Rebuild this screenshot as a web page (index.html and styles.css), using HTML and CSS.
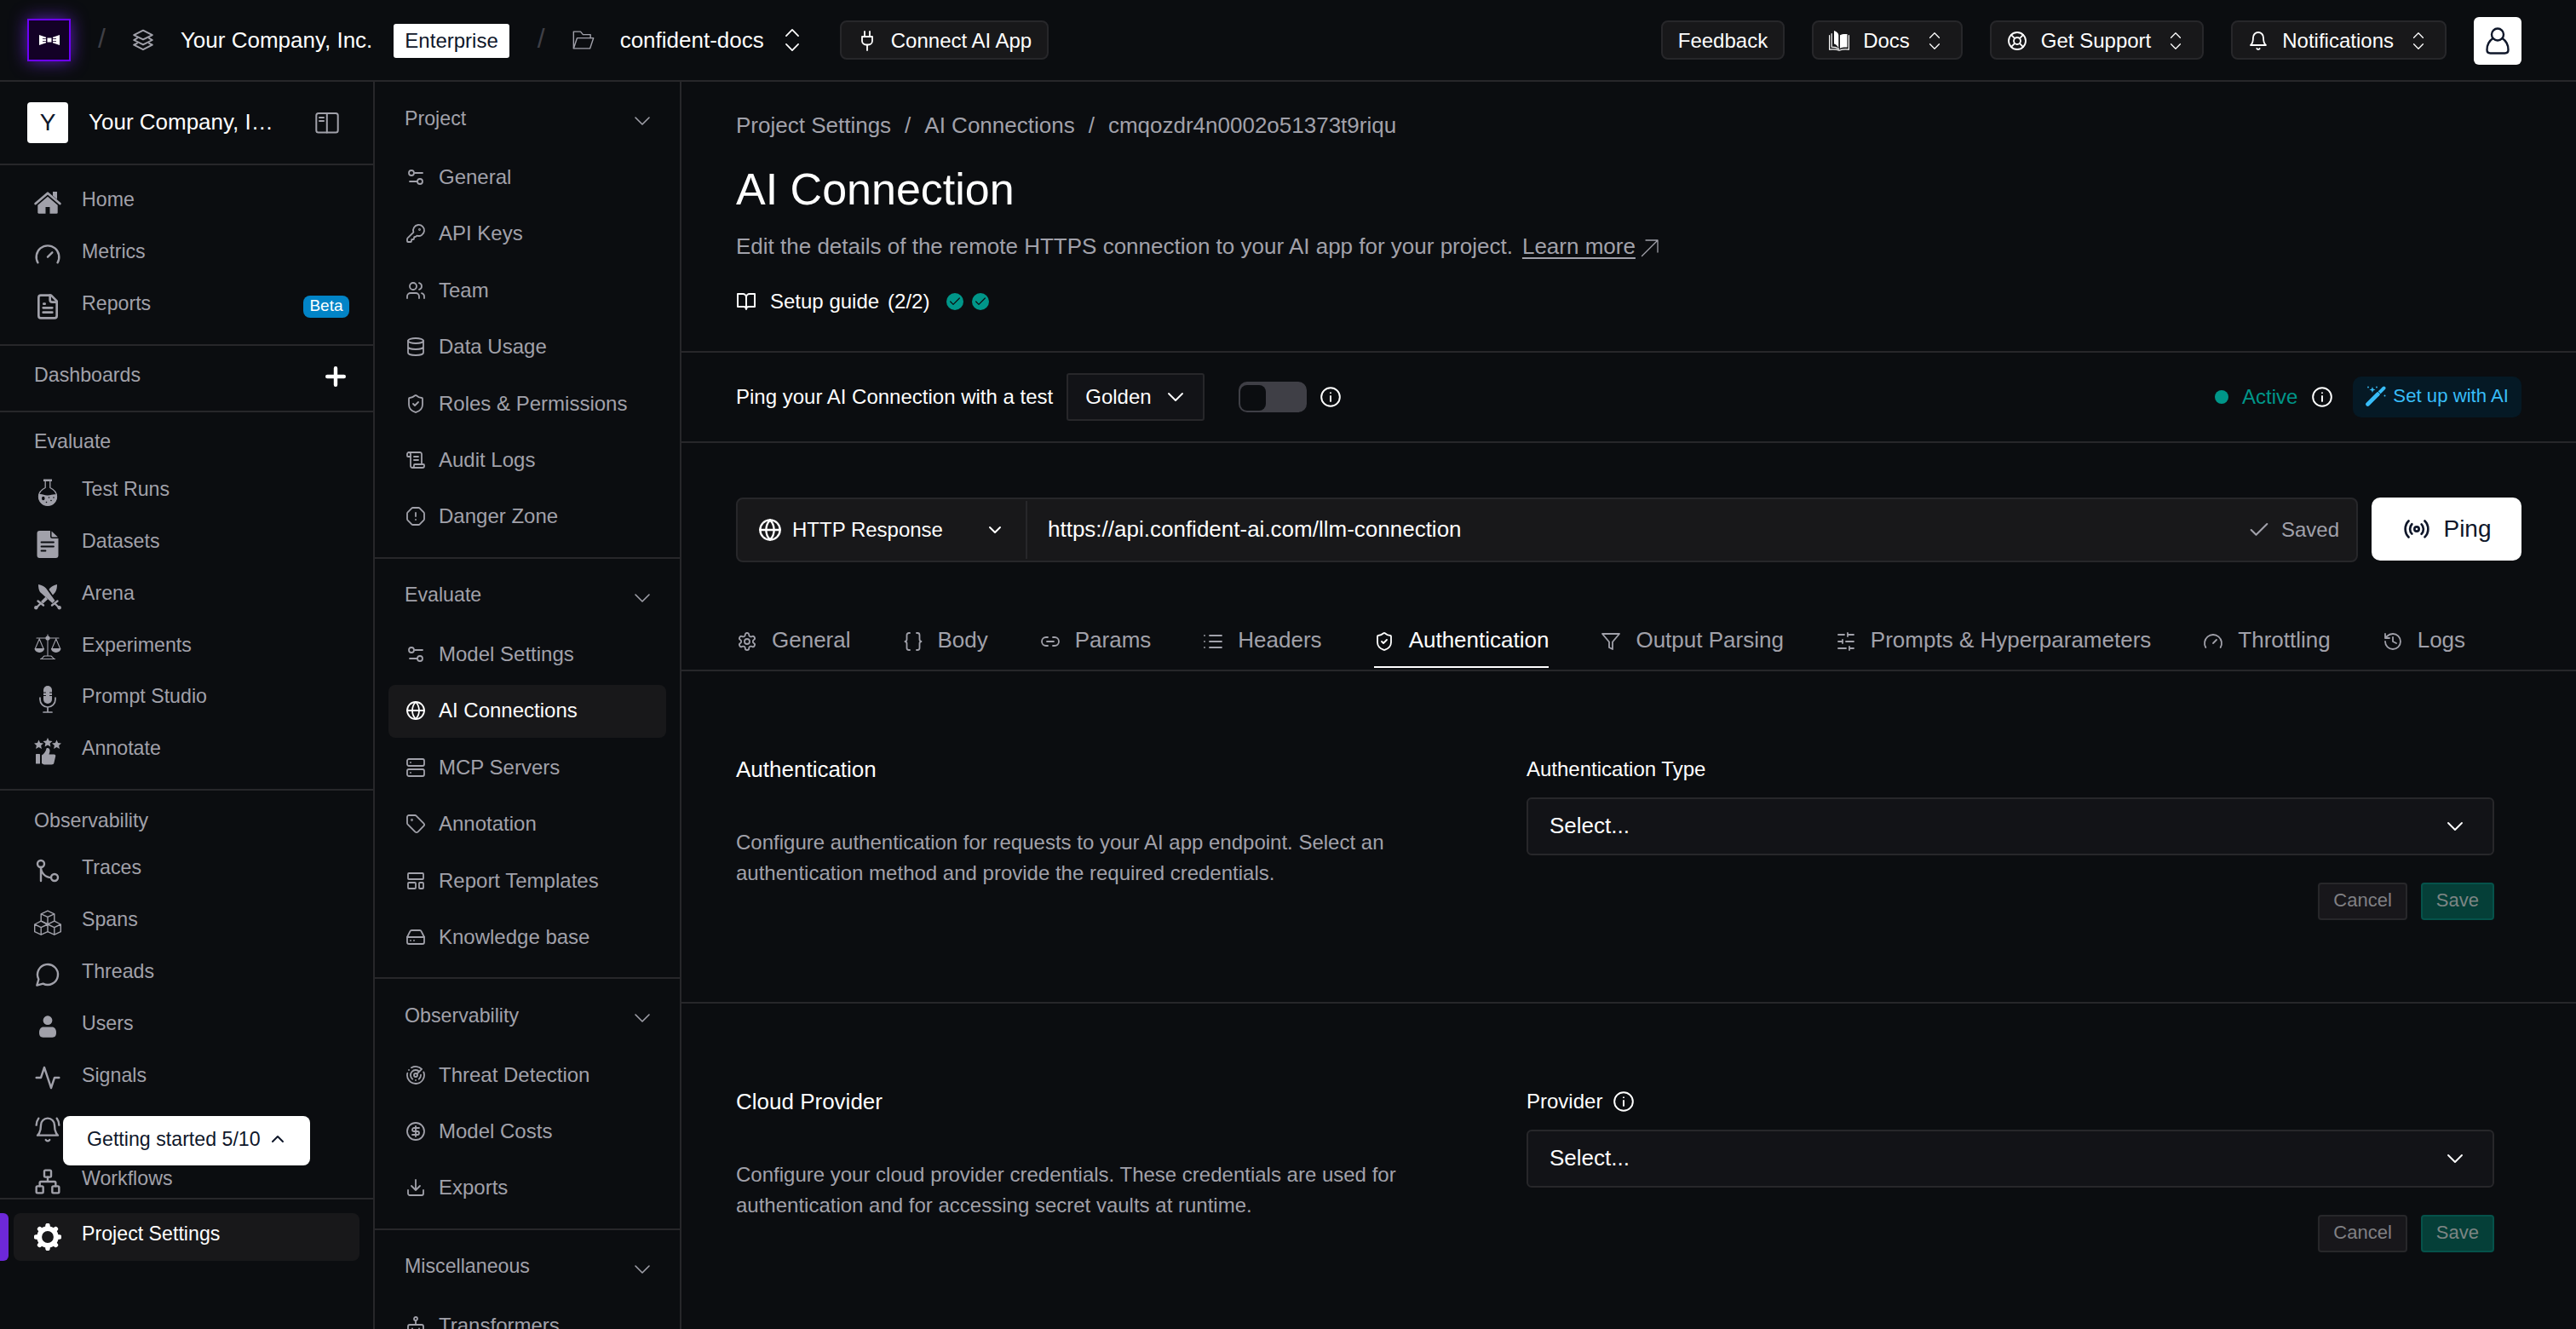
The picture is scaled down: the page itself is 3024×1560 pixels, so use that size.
FILE: index.html
```html
<!DOCTYPE html>
<html lang="en">
<head>
    <meta charset="UTF-8">
    <meta name="viewport" content="width=device-width, initial-scale=1.0">
    <title>AI Connection</title>
    <link rel="stylesheet" href="styles.css">
</head>
<body>
    <!-- Icon sprite -->
    <svg class="sprite">
        <symbol id="layers" viewBox="0 0 24 24"><path d="M12 1.5 2 6.5l10 5 10-5z"/><path d="M5.5 10 2 12l10 5 10-5-3.5-2"/><path d="M5.5 15.5 2 17.3l10 5 10-5-3.5-1.8"/></symbol>
        <symbol id="folder" viewBox="0 0 24 24"><path d="M2 20V3.500h7l2.500 3h7.500v3.500"/><path d="M2 20.500 5.500 10H22l-3.500 10.500z"/></symbol>
        <symbol id="updown" viewBox="0 0 24 24"><path d="m7 15.500 5 5 5-5"/><path d="m7 8.500 5-5 5 5"/></symbol>
        <symbol id="down" viewBox="0 0 24 24"><path d="m6 9 6 6 6-6"/></symbol>
        <symbol id="up" viewBox="0 0 24 24"><path d="m18 15-6-6-6 6"/></symbol>
        <symbol id="plug" viewBox="0 0 24 24"><path d="M12 23v-6"/><path d="M9 7V1"/><path d="M15 7V1"/><path d="M18 7v5a4.500 4.500 0 0 1-4.500 4.500h-3A4.500 4.500 0 0 1 6 12V7z"/></symbol>
        <symbol id="docs" viewBox="0 0 24 24"><path d="M6 0c3.500 1 5 3 5.300 5v15.500C10 17.500 8 16 6 15.500z" fill="currentColor" stroke="none"/><path d="M13 5.200C15 4 18 3.700 21.500 4v15.500c-3.500-.3-6.500.2-8.500 1.300z" fill="currentColor" stroke="none"/><path d="M.6 5.500v16.700c4-.6 8-.4 11.400 1.100 3.500-1.500 7.500-1.700 11.400-1.100V5.500M3.200 3.500v15.700c3 0 6 .6 8.500 2.300" stroke-width="1.200"/></symbol>
        <symbol id="support" viewBox="0 0 24 24"><circle cx="12" cy="12" r="10"/><circle cx="12" cy="12" r="4"/><path d="m4.930 4.930 4.240 4.240M14.830 9.170l4.240-4.240M14.830 14.830l4.240 4.240M9.170 14.830l-4.240 4.240"/></symbol>
        <symbol id="bell" viewBox="0 0 24 24"><path d="M6 8a6 6 0 0 1 12 0c0 7 3 9 3 9H3s3-2 3-9"/><path d="M10.300 21a1.940 1.940 0 0 0 3.400 0"/></symbol>
        <symbol id="person" viewBox="0 0 32 32"><circle cx="16" cy="8.500" r="7"/><path d="M10.500 13C6 16 3.500 20.500 3.500 26.500c0 2.500 1.500 4 4 4h17c2.500 0 4-1.500 4-4 0-6-2.500-10.500-7-13.500"/></symbol>
        <symbol id="panel" viewBox="0 0 28 28"><rect x="1.300" y="3" width="25.400" height="22.400" rx="2.500"/><path d="M13.800 3v22.400M5 8h5M5 12h5"/></symbol>
        <symbol id="plus" viewBox="0 0 24 24"><path d="M12 2.200v19.600M2.200 12h19.600" stroke-width="4.400"/></symbol>

        <!-- left rail -->
        <symbol id="home" viewBox="0 0 32 32"><path d="M1.700 17 16 4.800 30.300 17" stroke-width="2.800"/><path d="M22 3h5v9l-5-4.200z" fill="currentColor" stroke="none"/><path d="M16 8.800 4.300 18.700v8.800c0 .8.400 1.200 1.200 1.200h8V21h5v7.700h8c.8 0 1.200-.4 1.200-1.200v-8.800z" fill="currentColor" stroke="none"/></symbol>
        <symbol id="gauge" viewBox="0 0 24 24"><path d="m12 14 4-4"/><path d="M3.340 19a10 10 0 1 1 17.320 0"/></symbol>
        <symbol id="file" viewBox="0 0 24 24"><path d="M15 2H6a2 2 0 0 0-2 2v16a2 2 0 0 0 2 2h12a2 2 0 0 0 2-2V7z"/><path d="M14 2v4a2 2 0 0 0 2 2h4"/><path d="M9.500 9.500H8.500M16 13H8M16 17H8"/></symbol>
        <symbol id="flask" viewBox="0 0 32 32"><path d="M11 .5h10V3H11z" fill="currentColor" stroke="none"/><path d="M13.200 3v7.500C8 13 5.500 16.500 5.500 20.800a10.500 10.500 0 0 0 21 0c0-4.300-2.500-7.800-7.700-10.300V3" stroke-width="1.300"/><path d="M5.200 18.500c4-1.500 7 1.500 11 1 4-.5 7-2 10.600-1a11 11 0 1 1-21.600 0z" fill="currentColor" stroke="none"/><g fill="#0b0d10" stroke="none"><ellipse cx="10.800" cy="23" rx="1.800" ry="2.200"/><circle cx="17.500" cy="22" r=".8"/><circle cx="20" cy="25.500" r=".8"/><circle cx="23" cy="22" r=".8"/><circle cx="14.500" cy="27.500" r=".8"/></g></symbol>
        <symbol id="dataset" viewBox="0 0 32 32"><path d="M6.500 0H19v6.500A2.500 2.500 0 0 0 21.500 9H28.500v20a3 3 0 0 1-3 3h-19a3 3 0 0 1-3-3V3a3 3 0 0 1 3-3z" fill="currentColor" stroke="none"/><path d="M20.500.5 28 7.500h-6.500a1 1 0 0 1-1-1z" fill="currentColor" stroke="none"/><path d="M8.500 13.500h14.500M8.500 18.500h14.500M8.500 23.500h5" stroke="#0b0d10" stroke-width="1.800"/></symbol>
        <symbol id="swords" viewBox="0 0 32 32"><g fill="currentColor" stroke="none"><path d="M5 2c4 .8 7 2.200 9 4.500l10.500 14.500-3 3L7 11C5.500 8.500 5 5.500 5 2z"/><path d="M27 2c-3.500.8-6.500 2.200-8.500 4.500l-1 1.400 4.500 6.600L25 11c1.500-2.500 2-5.500 2-9zM13.500 16.500 8 22l2.500 2.500 5.500-5z"/><circle cx="2.300" cy="29.200" r="2.200"/><circle cx="29.700" cy="29.200" r="2.200"/></g><path d="M4.500 21.500l6.500 5M27.500 21.500l-6.500 5" stroke-width="2.400"/><path d="M7.500 24.500 3 29M24.500 24.500 29 29" stroke-width="2.400"/></symbol>
        <symbol id="scales" viewBox="0 0 32 32"><g stroke-width="1.100"><path d="M3 5h26M16 1v25M6.200 6 1.500 17M6.200 6l4.700 11M25.800 6l-4.700 11M25.800 6l4.700 11M12 26h8M8.500 29.300 12 26M20 26l3.500 3.300M7.500 29.500h17"/></g><g fill="currentColor" stroke="none"><circle cx="16" cy="5" r="2.600"/><path d="M.5 17h11.600a5.800 5 0 0 1-11.600 0zM19.900 17h11.600a5.800 5 0 0 1-11.600 0z"/></g></symbol>
        <symbol id="mic" viewBox="0 0 32 32"><rect x="11" y="0" width="10" height="21" rx="5" fill="currentColor" stroke="none"/><path d="M10.500 8h3M18.500 8h3M10.500 11.500h3M18.500 11.500h3" stroke="#0b0d10" stroke-width="1"/><path d="M7 14v2a9 9 0 0 0 18 0v-2M16 25v5M11 31h10" stroke-width="1.700"/></symbol>
        <symbol id="annotate" viewBox="0 0 32 32"><g fill="currentColor" stroke="none"><path d="m16 0 1.600 3.500 3.900.4-2.900 2.600.8 3.900-3.400-2-3.400 2 .8-3.900-2.900-2.600 3.900-.4z"/><path d="m5.500 2.500 1.600 3.500 3.900.4L8.100 9l.8 3.900-3.400-2-3.400 2L2.900 9 0 6.400l3.900-.4zM26.500 2.500 28.100 6l3.900.4L29.100 9l.8 3.900-3.400-2-3.400 2 .8-3.900L21 6.400l3.900-.4z"/><rect x="2" y="19" width="5" height="11.500" rx=".6"/><path d="M9 20.500c3-2 4.800-4.500 5.500-8 1.800-1 4 0 4 2.500 0 2-.8 3.500-1 4.500h6c1.300 0 2 1 1.700 2.200L23.500 29c-.4 1.800-1.200 2.500-3 2.500H13c-1.800 0-3-.6-4-1.500z"/></g></symbol>
        <symbol id="traces" viewBox="0 0 24 24"><circle cx="18" cy="18" r="3"/><circle cx="6" cy="6" r="3"/><path d="M6 21V9a9 9 0 0 0 9 9"/></symbol>
        <symbol id="spans" viewBox="0 0 32 32"><g stroke-width="1.400"><path d="M16 2.200 23.800 5.800v8.400L16 18l-7.800-3.800V5.800zM8.200 5.800 16 9.400l7.800-3.600M16 9.400V18"/><path d="M8.200 14.200 16 18v8.700l-7.800 3.500-7.500-3.500V18zM.7 18l7.500 3.600L16 18M8.200 21.600v8.600"/><path d="M23.800 14.200 31.300 18v8.700l-7.500 3.500-7.800-3.500M16 18l7.800 3.600 7.500-3.600M23.800 21.600v8.600"/></g></symbol>
        <symbol id="threads" viewBox="0 0 24 24"><path d="M7.900 20A9 9 0 1 0 4 16.100L2.500 21.500z"/></symbol>
        <symbol id="user" viewBox="0 0 32 32"><g fill="currentColor" stroke="none"><circle cx="16" cy="8.700" r="5.400"/><path d="M11 16.500h10c3 0 5 2.500 5 6.500 0 4-1.500 5.700-4.500 5.700h-11C7.500 28.700 6 27 6 23c0-4 2-6.500 5-6.500z"/></g></symbol>
        <symbol id="signals" viewBox="0 0 24 24"><path d="M22 12h-4l-3 9L9 3l-3 9H2"/></symbol>
        <symbol id="bellring" viewBox="0 0 24 24"><path d="M6 8a6 6 0 0 1 12 0c0 7 3 9 3 9H3s3-2 3-9"/><path d="M10.300 21a1.940 1.940 0 0 0 3.400 0"/><path d="M4 2C2.800 3.700 2 5.700 2 8M22 8c0-2.300-.8-4.300-2-6"/></symbol>
        <symbol id="workflow" viewBox="0 0 24 24"><rect x="16" y="16" width="6" height="6" rx="1"/><rect x="2" y="16" width="6" height="6" rx="1"/><rect x="9" y="2" width="6" height="6" rx="1"/><path d="M5 16v-3a1 1 0 0 1 1-1h12a1 1 0 0 1 1 1v3M12 12V8"/></symbol>
        <symbol id="gear" viewBox="0 0 32 32"><circle cx="16" cy="16" r="9.800" stroke-width="5.800"/><path d="M16 5V2.500M16 27v2.500M5 16H2.500M27 16h2.500M8.200 8.200 6.600 6.600M23.800 8.200l1.600-1.600M8.200 23.800l-1.600 1.600M23.800 23.800l1.600 1.600" stroke-width="5.500"/></symbol>

        <!-- settings column -->
        <symbol id="settings2" viewBox="0 0 24 24"><path d="M20 7h-9M14 17H5"/><circle cx="17" cy="17" r="3"/><circle cx="7" cy="7" r="3"/></symbol>
        <symbol id="key" viewBox="0 0 24 24"><path d="M2.586 17.414A2 2 0 0 0 2 18.828V21a1 1 0 0 0 1 1h3a1 1 0 0 0 1-1v-1a1 1 0 0 1 1-1h1a1 1 0 0 0 1-1v-1a1 1 0 0 1 1-1h.172a2 2 0 0 0 1.414-.586l.814-.814a6.500 6.500 0 1 0-4-4z"/><circle cx="16.500" cy="7.500" r=".5"/></symbol>
        <symbol id="team" viewBox="0 0 24 24"><path d="M16 21v-2a4 4 0 0 0-4-4H6a4 4 0 0 0-4 4v2"/><circle cx="9" cy="7" r="4"/><path d="M22 21v-2a4 4 0 0 0-3-3.870M16 3.130a4 4 0 0 1 0 7.750"/></symbol>
        <symbol id="database" viewBox="0 0 24 24"><ellipse cx="12" cy="5" rx="9" ry="3"/><path d="M3 5v14a9 3 0 0 0 18 0V5M3 12a9 3 0 0 0 18 0"/></symbol>
        <symbol id="shield" viewBox="0 0 24 24"><path d="M20 13c0 5-3.500 7.500-7.660 8.950a1 1 0 0 1-.67-.01C7.500 20.500 4 18 4 13V6a1 1 0 0 1 1-1c2 0 4.500-1.200 6.240-2.720a1.170 1.170 0 0 1 1.520 0C14.510 3.810 17 5 19 5a1 1 0 0 1 1 1z"/><path d="m9 12 2 2 4-4"/></symbol>
        <symbol id="scroll" viewBox="0 0 24 24"><path d="M15 12h-5M15 8h-5M19 17V5a2 2 0 0 0-2-2H4"/><path d="M8 21h12a2 2 0 0 0 2-2v-1a1 1 0 0 0-1-1H11a1 1 0 0 0-1 1v1a2 2 0 1 1-4 0V5a2 2 0 1 0-4 0v2a1 1 0 0 0 1 1h3"/></symbol>
        <symbol id="octagon" viewBox="0 0 24 24"><path d="M12 16h.01M12 8v4"/><path d="M15.312 2a2 2 0 0 1 1.414.586l4.688 4.688A2 2 0 0 1 22 8.688v6.624a2 2 0 0 1-.586 1.414l-4.688 4.688a2 2 0 0 1-1.414.586H8.688a2 2 0 0 1-1.414-.586l-4.688-4.688A2 2 0 0 1 2 15.312V8.688a2 2 0 0 1 .586-1.414l4.688-4.688A2 2 0 0 1 8.688 2z"/></symbol>
        <symbol id="globe" viewBox="0 0 24 24"><circle cx="12" cy="12" r="10"/><path d="M12 2a14.500 14.500 0 0 0 0 20 14.500 14.500 0 0 0 0-20M2 12h20"/></symbol>
        <symbol id="server" viewBox="0 0 24 24"><rect x="2" y="2" width="20" height="8" rx="2"/><rect x="2" y="14" width="20" height="8" rx="2"/><path d="M6 6h.01M6 18h.01"/></symbol>
        <symbol id="tag" viewBox="0 0 24 24"><path d="M12.586 2.586A2 2 0 0 0 11.172 2H4a2 2 0 0 0-2 2v7.172a2 2 0 0 0 .586 1.414l8.704 8.704a2.426 2.426 0 0 0 3.420 0l6.580-6.580a2.426 2.426 0 0 0 0-3.420z"/><circle cx="7.500" cy="7.500" r=".5"/></symbol>
        <symbol id="template" viewBox="0 0 24 24"><rect x="3" y="3" width="18" height="7" rx="1"/><rect x="3" y="14" width="9" height="7" rx="1"/><rect x="16" y="14" width="5" height="7" rx="1"/></symbol>
        <symbol id="drive" viewBox="0 0 24 24"><path d="M22 12H2M6 16h.01M10 16h.01"/><path d="M5.450 5.110 2 12v6a2 2 0 0 0 2 2h16a2 2 0 0 0 2-2v-6l-3.450-6.890A2 2 0 0 0 16.760 4H7.240a2 2 0 0 0-1.790 1.110z"/></symbol>
        <symbol id="radar" viewBox="0 0 24 24"><path d="M19.070 4.930A10 10 0 0 0 6.990 3.340M4 6h.01M2.290 9.620A10 10 0 1 0 21.310 8.350M16.240 7.760A6 6 0 1 0 8.230 16.670M12 18h.01M17.990 11.660A6 6 0 0 1 15.770 16.670M13.410 10.590l5.660-5.660"/><circle cx="12" cy="12" r="2"/></symbol>
        <symbol id="dollar" viewBox="0 0 24 24"><circle cx="12" cy="12" r="10"/><path d="M16 8h-6a2 2 0 1 0 0 4h4a2 2 0 1 1 0 4H8M12 18V6"/></symbol>
        <symbol id="download" viewBox="0 0 24 24"><path d="M21 15v4a2 2 0 0 1-2 2H5a2 2 0 0 1-2-2v-4M7 10l5 5 5-5M12 15V3"/></symbol>
        <symbol id="bot" viewBox="0 0 24 24"><circle cx="12" cy="4" r="2"/><path d="M12 6v5M8 15.500h.01M16 15.500h.01"/><rect x="3" y="11" width="18" height="10" rx="2"/></symbol>

        <!-- page -->
        <symbol id="arrow" viewBox="0 0 24 24"><path d="M2.500 21.500 21 3M7 3h14v14"/></symbol>
        <symbol id="book" viewBox="0 0 24 24"><path d="M2 3h6a4 4 0 0 1 4 4v14a3 3 0 0 0-3-3H2zM22 3h-6a4 4 0 0 0-4 4v14a3 3 0 0 1 3-3h7z"/></symbol>
        <symbol id="check" viewBox="0 0 24 24"><path d="M20 6 9 17l-5-5"/></symbol>
        <symbol id="info" viewBox="0 0 24 24"><circle cx="12" cy="12" r="10"/><path d="M12 16.500v-5.500M12 7.500h.01"/></symbol>
        <symbol id="wand" viewBox="0 0 24 24"><path d="M2.500 21.500 14.500 9.500" stroke-width="4.600"/><path d="m16.500 7.500 5-5" stroke-width="4"/><path d="m14.500 6.500 3 3" stroke="#051925" stroke-width=".8"/><g fill="currentColor" stroke="none"><path d="m8 1 .9 2.600 2.600.9-2.600.9L8 8l-.9-2.600-2.600-.9 2.600-.9z"/><circle cx="3" cy="1.500" r=".9"/><circle cx="13" cy="1.500" r=".9"/><circle cx="22.500" cy="11.500" r="1"/></g></symbol>
        <symbol id="radio" viewBox="0 0 24 24"><path d="M4.900 19.100C1 15.200 1 8.800 4.900 4.900M7.800 16.200c-2.300-2.300-2.300-6.100 0-8.500M16.200 7.800c2.300 2.300 2.300 6.100 0 8.500M19.100 4.900C23 8.800 23 15.100 19.100 19"/><circle cx="12" cy="12" r="2"/></symbol>
        <symbol id="cog" viewBox="0 0 24 24"><path d="M12.220 2h-.44a2 2 0 0 0-2 2v.18a2 2 0 0 1-1 1.730l-.43.25a2 2 0 0 1-2 0l-.15-.08a2 2 0 0 0-2.730.73l-.22.38a2 2 0 0 0 .73 2.730l.15.1a2 2 0 0 1 1 1.720v.51a2 2 0 0 1-1 1.740l-.15.09a2 2 0 0 0-.73 2.730l.22.38a2 2 0 0 0 2.730.73l.15-.08a2 2 0 0 1 2 0l.43.25a2 2 0 0 1 1 1.730V20a2 2 0 0 0 2 2h.44a2 2 0 0 0 2-2v-.18a2 2 0 0 1 1-1.730l.43-.25a2 2 0 0 1 2 0l.15.08a2 2 0 0 0 2.730-.73l.22-.39a2 2 0 0 0-.73-2.730l-.15-.08a2 2 0 0 1-1-1.740v-.5a2 2 0 0 1 1-1.740l.15-.09a2 2 0 0 0 .73-2.730l-.22-.38a2 2 0 0 0-2.730-.73l-.15.08a2 2 0 0 1-2 0l-.43-.25a2 2 0 0 1-1-1.730V4a2 2 0 0 0-2-2z"/><circle cx="12" cy="12" r="3"/></symbol>
        <symbol id="braces" viewBox="0 0 24 24"><path d="M8 2H7a2.500 2.500 0 0 0-2.500 2.500v5A2.500 2.500 0 0 1 2.500 12a2.500 2.500 0 0 1 2 2.500v5A2.500 2.500 0 0 0 7 22h1M16 22h1a2.500 2.500 0 0 0 2.500-2.500v-5a2.500 2.500 0 0 1 2-2.500 2.500 2.500 0 0 1-2-2.500v-5A2.500 2.500 0 0 0 17 2h-1"/></symbol>
        <symbol id="link" viewBox="0 0 24 24"><path d="M9 17H7A5 5 0 0 1 7 7h2M15 7h2a5 5 0 1 1 0 10h-2M8 12h8"/></symbol>
        <symbol id="list" viewBox="0 0 24 24"><path d="M8 5h14M8 12h14M8 19h14M2 5h.01M2 12h.01M2 19h.01"/></symbol>
        <symbol id="filter" viewBox="0 0 24 24"><path d="M22 3H2l8 9.460V19l4 2v-8.540z"/></symbol>
        <symbol id="sliders" viewBox="0 0 24 24"><path d="M21 4h-7M10 4H3M21 12h-9M8 12H3M21 20h-5M12 20H3M14 2v4M8 10v4M16 18v4"/></symbol>
        <symbol id="history" viewBox="0 0 24 24"><path d="M3 12a9 9 0 1 0 9-9 9.750 9.750 0 0 0-6.740 2.740L3 8M3 3v5h5M12 7v5l4 2"/></symbol>
    </svg>

    <header class="topbar">
        <div class="logo">
            <svg viewBox="0 0 24 12" width="24" height="12"><path d="M0 0 8 2.800v6.400L0 12zM24 0l-8 2.800v6.400L24 12z" fill="#fff"/><path d="M9.500 3.500h5v5h-5z" fill="#fff"/><path d="M4 4.500h5M4 7.500h5M15 4.500h5M15 7.500h5" stroke="#130126" stroke-width=".8"/></svg>
        </div>
        <span class="slash first">/</span>
        <svg class="icon i26 muted"><use href="#layers"/></svg>
        <span class="org">Your Company, Inc.</span>
        <span class="plan">Enterprise</span>
        <span class="slash second">/</span>
        <svg class="icon i28 muted thin"><use href="#folder"/></svg>
        <span class="project">confident-docs</span>
        <svg class="icon i34 thin"><use href="#updown"/></svg>
        <button class="btn connect"><svg class="icon i24"><use href="#plug"/></svg>Connect AI App</button>
        <div class="topbar-right">
            <button class="btn">Feedback</button>
            <button class="btn"><svg class="icon i24"><use href="#docs"/></svg>Docs<svg class="icon i26 thin"><use href="#updown"/></svg></button>
            <button class="btn"><svg class="icon i24"><use href="#support"/></svg>Get Support<svg class="icon i26 thin"><use href="#updown"/></svg></button>
            <button class="btn"><svg class="icon i24"><use href="#bell"/></svg>Notifications<svg class="icon i26 thin"><use href="#updown"/></svg></button>
            <div class="account"><svg class="icon i32"><use href="#person"/></svg></div>
        </div>
    </header>

    <div class="layout">
        <aside class="rail">
            <div class="team">
                <div class="team-avatar">Y</div>
                <span class="team-name">Your Company, I…</span>
                <svg class="icon i28 muted bold"><use href="#panel"/></svg>
            </div>
            <nav class="rail-scroll">
                <div class="rail-section">
                    <a class="rail-item"><svg class="icon i32"><use href="#home"/></svg><span>Home</span></a>
                    <a class="rail-item"><svg class="icon i32"><use href="#gauge"/></svg><span>Metrics</span></a>
                    <a class="rail-item"><svg class="icon i32 bold"><use href="#file"/></svg><span>Reports</span><b class="beta">Beta</b></a>
                </div>
                <div class="rail-section">
                    <div class="rail-heading only">Dashboards<svg class="icon i24"><use href="#plus"/></svg></div>
                </div>
                <div class="rail-section">
                    <div class="rail-heading">Evaluate</div>
                    <a class="rail-item"><svg class="icon i32"><use href="#flask"/></svg><span>Test Runs</span></a>
                    <a class="rail-item"><svg class="icon i32"><use href="#dataset"/></svg><span>Datasets</span></a>
                    <a class="rail-item"><svg class="icon i32"><use href="#swords"/></svg><span>Arena</span></a>
                    <a class="rail-item"><svg class="icon i32"><use href="#scales"/></svg><span>Experiments</span></a>
                    <a class="rail-item"><svg class="icon i32"><use href="#mic"/></svg><span>Prompt Studio</span></a>
                    <a class="rail-item"><svg class="icon i32"><use href="#annotate"/></svg><span>Annotate</span></a>
                </div>
                <div class="rail-section">
                    <div class="rail-heading">Observability</div>
                    <a class="rail-item"><svg class="icon i32"><use href="#traces"/></svg><span>Traces</span></a>
                    <a class="rail-item"><svg class="icon i32"><use href="#spans"/></svg><span>Spans</span></a>
                    <a class="rail-item"><svg class="icon i32"><use href="#threads"/></svg><span>Threads</span></a>
                    <a class="rail-item"><svg class="icon i32"><use href="#user"/></svg><span>Users</span></a>
                    <a class="rail-item"><svg class="icon i32"><use href="#signals"/></svg><span>Signals</span></a>
                    <a class="rail-item"><svg class="icon i32"><use href="#bellring"/></svg></a>
                    <a class="rail-item"><svg class="icon i32"><use href="#workflow"/></svg><span>Workflows</span></a>
                </div>
            </nav>
            <div class="rail-footer">
                <a class="rail-item active"><svg class="icon i32"><use href="#gear"/></svg><span>Project Settings</span></a>
            </div>
            <button class="getting-started">Getting started 5/10<svg class="icon i24 bold"><use href="#up"/></svg></button>
        </aside>

        <nav class="subnav">
            <div class="sub-section">
                <div class="sub-heading">Project<svg class="icon i32 thin"><use href="#down"/></svg></div>
                <a class="sub-item"><svg class="icon i24"><use href="#settings2"/></svg>General</a>
                <a class="sub-item"><svg class="icon i24"><use href="#key"/></svg>API Keys</a>
                <a class="sub-item"><svg class="icon i24"><use href="#team"/></svg>Team</a>
                <a class="sub-item"><svg class="icon i24"><use href="#database"/></svg>Data Usage</a>
                <a class="sub-item"><svg class="icon i24"><use href="#shield"/></svg>Roles &amp; Permissions</a>
                <a class="sub-item"><svg class="icon i24"><use href="#scroll"/></svg>Audit Logs</a>
                <a class="sub-item"><svg class="icon i24"><use href="#octagon"/></svg>Danger Zone</a>
            </div>
            <div class="sub-section">
                <div class="sub-heading">Evaluate<svg class="icon i32 thin"><use href="#down"/></svg></div>
                <a class="sub-item"><svg class="icon i24"><use href="#settings2"/></svg>Model Settings</a>
                <a class="sub-item active"><svg class="icon i24"><use href="#globe"/></svg>AI Connections</a>
                <a class="sub-item"><svg class="icon i24"><use href="#server"/></svg>MCP Servers</a>
                <a class="sub-item"><svg class="icon i24"><use href="#tag"/></svg>Annotation</a>
                <a class="sub-item"><svg class="icon i24"><use href="#template"/></svg>Report Templates</a>
                <a class="sub-item"><svg class="icon i24"><use href="#drive"/></svg>Knowledge base</a>
            </div>
            <div class="sub-section">
                <div class="sub-heading">Observability<svg class="icon i32 thin"><use href="#down"/></svg></div>
                <a class="sub-item"><svg class="icon i24"><use href="#radar"/></svg>Threat Detection</a>
                <a class="sub-item"><svg class="icon i24"><use href="#dollar"/></svg>Model Costs</a>
                <a class="sub-item"><svg class="icon i24"><use href="#download"/></svg>Exports</a>
            </div>
            <div class="sub-section">
                <div class="sub-heading">Miscellaneous<svg class="icon i32 thin"><use href="#down"/></svg></div>
                <a class="sub-item"><svg class="icon i24"><use href="#bot"/></svg>Transformers</a>
            </div>
        </nav>

        <main class="page">
            <section class="page-head">
                <div class="breadcrumb"><span>Project Settings</span><span>/</span><span>AI Connections</span><span>/</span><span>cmqozdr4n0002o51373t9riqu</span></div>
                <h1>AI Connection</h1>
                <p class="lead">Edit the details of the remote HTTPS connection to your AI app for your project. <a>Learn more</a><svg class="icon i24"><use href="#arrow"/></svg></p>
                <div class="guide">
                    <svg class="icon i24 bold"><use href="#book"/></svg>
                    <span>Setup guide</span><span class="count">(2/2)</span>
                    <i class="done"><svg class="icon i16"><use href="#check"/></svg></i>
                    <i class="done"><svg class="icon i16"><use href="#check"/></svg></i>
                </div>
            </section>

            <section class="ping-bar">
                <span>Ping your AI Connection with a test</span>
                <div class="select small">Golden<svg class="icon i32"><use href="#down"/></svg></div>
                <div class="toggle"><div class="knob"></div></div>
                <svg class="icon i26"><use href="#info"/></svg>
                <div class="status">
                    <i class="dot"></i><span class="active-label">Active</span>
                    <svg class="icon i26"><use href="#info"/></svg>
                    <button class="ai-setup"><svg class="icon i24"><use href="#wand"/></svg>Set up with AI</button>
                </div>
            </section>

            <section class="endpoint">
                <div class="endpoint-row">
                    <div class="url-box">
                        <div class="method"><svg class="icon i28 bold"><use href="#globe"/></svg>HTTP Response<svg class="icon i24 bold"><use href="#down"/></svg></div>
                        <span class="url">https://api.confident-ai.com/llm-connection</span>
                        <span class="saved"><svg class="icon i28"><use href="#check"/></svg>Saved</span>
                    </div>
                    <button class="ping"><svg class="icon i32 bold"><use href="#radio"/></svg>Ping</button>
                </div>
                <nav class="tabs">
                    <a class="tab"><svg class="icon i24"><use href="#cog"/></svg>General</a>
                    <a class="tab"><svg class="icon i24"><use href="#braces"/></svg>Body</a>
                    <a class="tab"><svg class="icon i24"><use href="#link"/></svg>Params</a>
                    <a class="tab"><svg class="icon i24"><use href="#list"/></svg>Headers</a>
                    <a class="tab active"><svg class="icon i24"><use href="#shield"/></svg>Authentication</a>
                    <a class="tab"><svg class="icon i24"><use href="#filter"/></svg>Output Parsing</a>
                    <a class="tab"><svg class="icon i24"><use href="#sliders"/></svg>Prompts &amp; Hyperparameters</a>
                    <a class="tab"><svg class="icon i24"><use href="#gauge"/></svg>Throttling</a>
                    <a class="tab"><svg class="icon i24"><use href="#history"/></svg>Logs</a>
                </nav>
            </section>

            <section class="form-section">
                <div class="about">
                    <h2>Authentication</h2>
                    <p>Configure authentication for requests to your AI app endpoint. Select an authentication method and provide the required credentials.</p>
                </div>
                <div class="fields">
                    <label>Authentication Type</label>
                    <div class="select">Select...<svg class="icon i32"><use href="#down"/></svg></div>
                    <div class="actions"><button class="cancel">Cancel</button><button class="save">Save</button></div>
                </div>
            </section>

            <section class="form-section">
                <div class="about">
                    <h2>Cloud Provider</h2>
                    <p>Configure your cloud provider credentials. These credentials are used for authentication and for accessing secret vaults at runtime.</p>
                </div>
                <div class="fields">
                    <label>Provider<svg class="icon i26"><use href="#info"/></svg></label>
                    <div class="select">Select...<svg class="icon i32"><use href="#down"/></svg></div>
                    <div class="actions"><button class="cancel">Cancel</button><button class="save">Save</button></div>
                </div>
            </section>
        </main>
    </div>
</body>
</html>
```
FILE: styles.css
```css
* {
    box-sizing: border-box;
}
body {
    margin: 0;
    height: 1560px;
    overflow: hidden;
    background: #0b0d10;
    color: #fff;
    font-family: "Liberation Sans", Arial, sans-serif;
    font-size: 24px;
}
h1, h2, p {
    margin: 0;
    font-weight: normal;
}
button {
    font: inherit;
    color: inherit;
    cursor: pointer;
}
.sprite {
    display: none;
}

/* Icons */
.icon {
    flex: none;
    fill: none;
    stroke: currentColor;
    stroke-width: 1.8;
    stroke-linecap: round;
    stroke-linejoin: round;
}
.icon.thin {
    stroke-width: 1.2;
}
.icon.bold {
    stroke-width: 2;
}
.i16 { width: 16px; height: 16px; }
.i24 { width: 24px; height: 24px; }
.i26 { width: 26px; height: 26px; }
.i28 { width: 28px; height: 28px; }
.i32 { width: 32px; height: 32px; }
.i34 { width: 34px; height: 34px; }
.muted {
    color: #a1a1aa;
}

/* Top bar */
.topbar {
    display: flex;
    align-items: center;
    height: 96px;
    padding: 0 64px 0 32px;
    border-bottom: 2px solid #27272a;
    font-size: 26px;
}
.logo {
    display: flex;
    align-items: center;
    justify-content: center;
    width: 51px;
    height: 50px;
    border: 2px solid #6d00f9;
    background: #130126;
    box-shadow: 0 0 20px #5b21b6;
}
.slash {
    color: #3f3f46;
    font-size: 32px;
    line-height: 32px;
    padding-bottom: 4px;
}
.slash.first {
    margin: 0 31px 0 32px;
}
.slash.second {
    margin: 0 31px 0 33px;
}
.org {
    margin-left: 31px;
    padding-top: 1px;
}
.plan {
    height: 40px;
    margin: 2px 0 0 25px;
    padding: 0 13px;
    border-radius: 3px;
    background: #fff;
    color: #0f172a;
    font-size: 24px;
    line-height: 40px;
}
.project {
    margin: 0 16px 0 29px;
    padding-top: 1px;
}
.btn {
    display: flex;
    align-items: center;
    gap: 16px;
    height: 46px;
    padding: 1px 18px 0;
    border: 2px solid #27272a;
    border-radius: 8px;
    background: #18181a;
    font-size: 24px;
}
.connect {
    margin-left: 39px;
}
.topbar-right {
    display: flex;
    align-items: center;
    gap: 32px;
    margin-left: auto;
}
.account {
    display: flex;
    align-items: center;
    justify-content: center;
    width: 56px;
    height: 56px;
    margin-top: 2px;
    border-radius: 6px;
    background: #fff;
    color: #0f172a;
}
.account .icon {
    stroke-width: 2.4;
}

.layout {
    display: grid;
    grid-template-columns: 440px 360px 1fr;
    height: 1464px;
}

/* Left rail */
.rail {
    position: relative;
    display: flex;
    flex-direction: column;
    min-height: 0;
    border-right: 2px solid #27272a;
    font-size: 23.2px;
}
.team {
    display: flex;
    align-items: center;
    height: 98px;
    padding: 0 40px 0 32px;
    border-bottom: 2px solid #27272a;
    font-size: 26px;
}
.team-avatar {
    width: 48px;
    height: 48px;
    border-radius: 4px;
    background: #fff;
    color: #0f172a;
    font-size: 28px;
    line-height: 48px;
    text-align: center;
}
.team-name {
    flex: 1;
    margin-left: 24px;
    padding-bottom: 2px;
}
.rail-scroll {
    height: 1212px;
    overflow: hidden;
    color: #a1a1aa;
}
.rail-section {
    padding: 16px 0 16.2px;
    border-bottom: 2px solid #27272a;
}
.rail-heading {
    display: flex;
    align-items: center;
    justify-content: space-between;
    height: 50px;
    padding: 0 32px 12px 40px;
}
.rail-heading.only {
    height: 44px;
    padding-bottom: 6px;
}
.rail-heading .icon {
    color: #fff;
    margin-top: 3px;
}
.rail-item {
    display: flex;
    align-items: center;
    height: 56px;
    margin: 0 16px 4.8px;
    padding: 0 12px 0 24px;
    border-radius: 8px;
}
.rail-item:last-child {
    margin-bottom: 0;
}
.rail-item span {
    margin-left: 24px;
    padding-bottom: 6.5px;
}
.beta {
    height: 26px;
    margin-left: auto;
    padding: 0 7.5px;
    border-radius: 8px;
    background: #0284c7;
    color: #fff;
    font-size: 19px;
    font-weight: normal;
    line-height: 24px;
}
.rail-footer {
    flex: 1;
    padding-top: 16px;
    border-top: 2px solid #27272a;
}
.rail-footer .rail-item {
    background: #18181a;
    color: #fff;
}
.rail-footer .rail-item::before {
    content: "";
    position: absolute;
    left: 0;
    width: 10px;
    height: 56px;
    border-radius: 0 6px 6px 0;
    background: #6d28d9;
}
.getting-started {
    position: absolute;
    left: 74px;
    top: 1214px;
    display: flex;
    align-items: center;
    gap: 8px;
    width: 290px;
    height: 58px;
    padding: 0 0 4px 28px;
    border: none;
    border-radius: 8px;
    background: #fff;
    color: #0f172a;
}

/* Settings column */
.subnav {
    min-height: 0;
    overflow: hidden;
    border-right: 2px solid #27272a;
    color: #a1a1aa;
}
.sub-section {
    padding: 16px;
    border-bottom: 2px solid #27272a;
}
.sub-heading {
    display: flex;
    align-items: center;
    justify-content: space-between;
    height: 66px;
    padding: 0 12px 12px 19px;
    font-size: 23.2px;
}
.sub-heading .icon {
    margin-top: 6px;
}
.sub-item {
    display: flex;
    align-items: center;
    gap: 15px;
    height: 61.6px;
    margin-bottom: 4.8px;
    padding: 0 20px 1.5px;
    border-radius: 8px;
}
.sub-item:last-child {
    margin-bottom: 0;
}
.sub-item.active {
    background: #18181a;
    color: #fff;
}

/* Page head */
.page {
    min-width: 0;
    overflow: hidden;
}
.page-head {
    height: 318px;
    padding: 33px 64px 0;
    border-bottom: 2px solid #27272a;
}
.breadcrumb {
    display: flex;
    gap: 16px;
    color: #a1a1aa;
    font-size: 26px;
    line-height: 36px;
}
h1 {
    margin-top: 25px;
    font-size: 52px;
    line-height: 64px;
}
.lead {
    display: flex;
    align-items: center;
    margin-top: 17px;
    color: #a1a1aa;
    font-size: 26px;
    line-height: 36px;
}
.lead a {
    margin-left: 11px;
    text-decoration: underline;
    text-underline-offset: 4px;
}
.lead .icon {
    margin: 4px 0 0 5px;
    stroke-width: 1.3;
}
.guide {
    display: flex;
    align-items: center;
    margin-top: 31px;
    line-height: 32px;
}
.guide span {
    margin-left: 16px;
}
.guide .count {
    margin: 0 20px 0 10px;
}
.done {
    display: flex;
    align-items: center;
    justify-content: center;
    width: 20px;
    height: 20px;
    margin-right: 10px;
    border-radius: 10px;
    background: #009689;
    color: #0b0d10;
}

/* Ping bar */
.ping-bar {
    display: flex;
    align-items: center;
    height: 106px;
    padding: 0 64px;
    border-bottom: 2px solid #27272a;
}
.select {
    display: flex;
    align-items: center;
    justify-content: space-between;
    height: 68px;
    padding: 0 28px 1px 25px;
    border: 2px solid #27272a;
    border-radius: 6px;
    background: #121317;
    font-size: 26px;
}
.select.small {
    width: 162px;
    height: 56px;
    margin-left: 16px;
    padding: 0 16px 0 20px;
    border-radius: 3px;
    font-size: 24px;
}
.select .icon {
    stroke-width: 1.4;
}
.toggle {
    width: 80px;
    height: 36px;
    margin: 0 15px 0 40px;
    padding: 4px 2px 2px;
    border-radius: 10px;
    background: #3f3f46;
}
.knob {
    width: 30px;
    height: 30px;
    border-radius: 8px;
    background: #0b0d10;
}
.status {
    display: flex;
    align-items: center;
    margin-left: auto;
}
.dot {
    width: 16px;
    height: 16px;
    border-radius: 8px;
    background: #009689;
}
.active-label {
    margin: 0 16px 0 16px;
    color: #009689;
}
.ai-setup {
    display: flex;
    align-items: center;
    gap: 8px;
    height: 48px;
    margin-left: 23px;
    padding: 0 15px 2px 15px;
    border: none;
    border-radius: 10px;
    background: #051925;
    color: #38bdf8;
    font-size: 22.2px;
}

/* Endpoint */
.endpoint {
    padding-top: 64px;
    border-bottom: 2px solid #27272a;
}
.endpoint-row {
    display: flex;
    align-items: flex-start;
    gap: 16px;
    padding: 0 64px;
}
.url-box {
    flex: 1;
    display: flex;
    align-items: center;
    height: 76px;
    border: 2px solid #27272a;
    border-radius: 8px;
    background: #18181a;
}
.method {
    display: flex;
    align-items: center;
    gap: 12px;
    width: 340px;
    height: 68px;
    padding: 0 24px;
    border-right: 2px solid #27272a;
}
.method .icon:last-child {
    margin-left: auto;
}
.url {
    padding: 0 0 1px 24px;
    font-size: 26px;
}
.saved {
    display: flex;
    align-items: center;
    gap: 12px;
    margin-left: auto;
    padding-right: 20px;
    color: #a1a1aa;
}
.ping {
    display: flex;
    align-items: center;
    justify-content: center;
    gap: 15px;
    width: 176px;
    height: 74px;
    padding-left: 8px;
    border: none;
    border-radius: 10px;
    background: #fff;
    color: #0f172a;
    font-size: 28px;
}
.tabs {
    display: flex;
    gap: 61px;
    margin: 73px 0 2px;
    padding-left: 65px;
    color: #a1a1aa;
    font-size: 26px;
    line-height: 36px;
    white-space: nowrap;
}
.tab {
    display: flex;
    align-items: center;
    gap: 17px;
    padding-bottom: 13px;
    border-bottom: 2px solid transparent;
}
.tab .icon {
    margin-top: 4px;
}
.tab.active {
    color: #fff;
    border-color: #fff;
}

/* Form sections */
.form-section {
    display: grid;
    grid-template-columns: 928px 1136px;
    height: 390px;
    padding: 97px 96px 0 64px;
    border-bottom: 2px solid #27272a;
}
h2 {
    font-size: 26px;
    line-height: 36px;
}
.about p {
    max-width: 800px;
    margin-top: 49.5px;
    color: #a1a1aa;
    line-height: 36px;
}
.fields label {
    display: flex;
    align-items: center;
    gap: 12px;
    height: 51px;
    padding-bottom: 16px;
}
.actions {
    display: flex;
    justify-content: flex-end;
    gap: 16px;
    margin-top: 32px;
}
.cancel, .save {
    height: 44px;
    padding: 0 16px 3px;
    border: 2px solid #27272a;
    border-radius: 4px;
    background: #18171b;
    color: #808084;
    font-size: 22px;
}
.save {
    border-color: #05524a;
    background: #053f38;
    color: #7d8584;
}
```
